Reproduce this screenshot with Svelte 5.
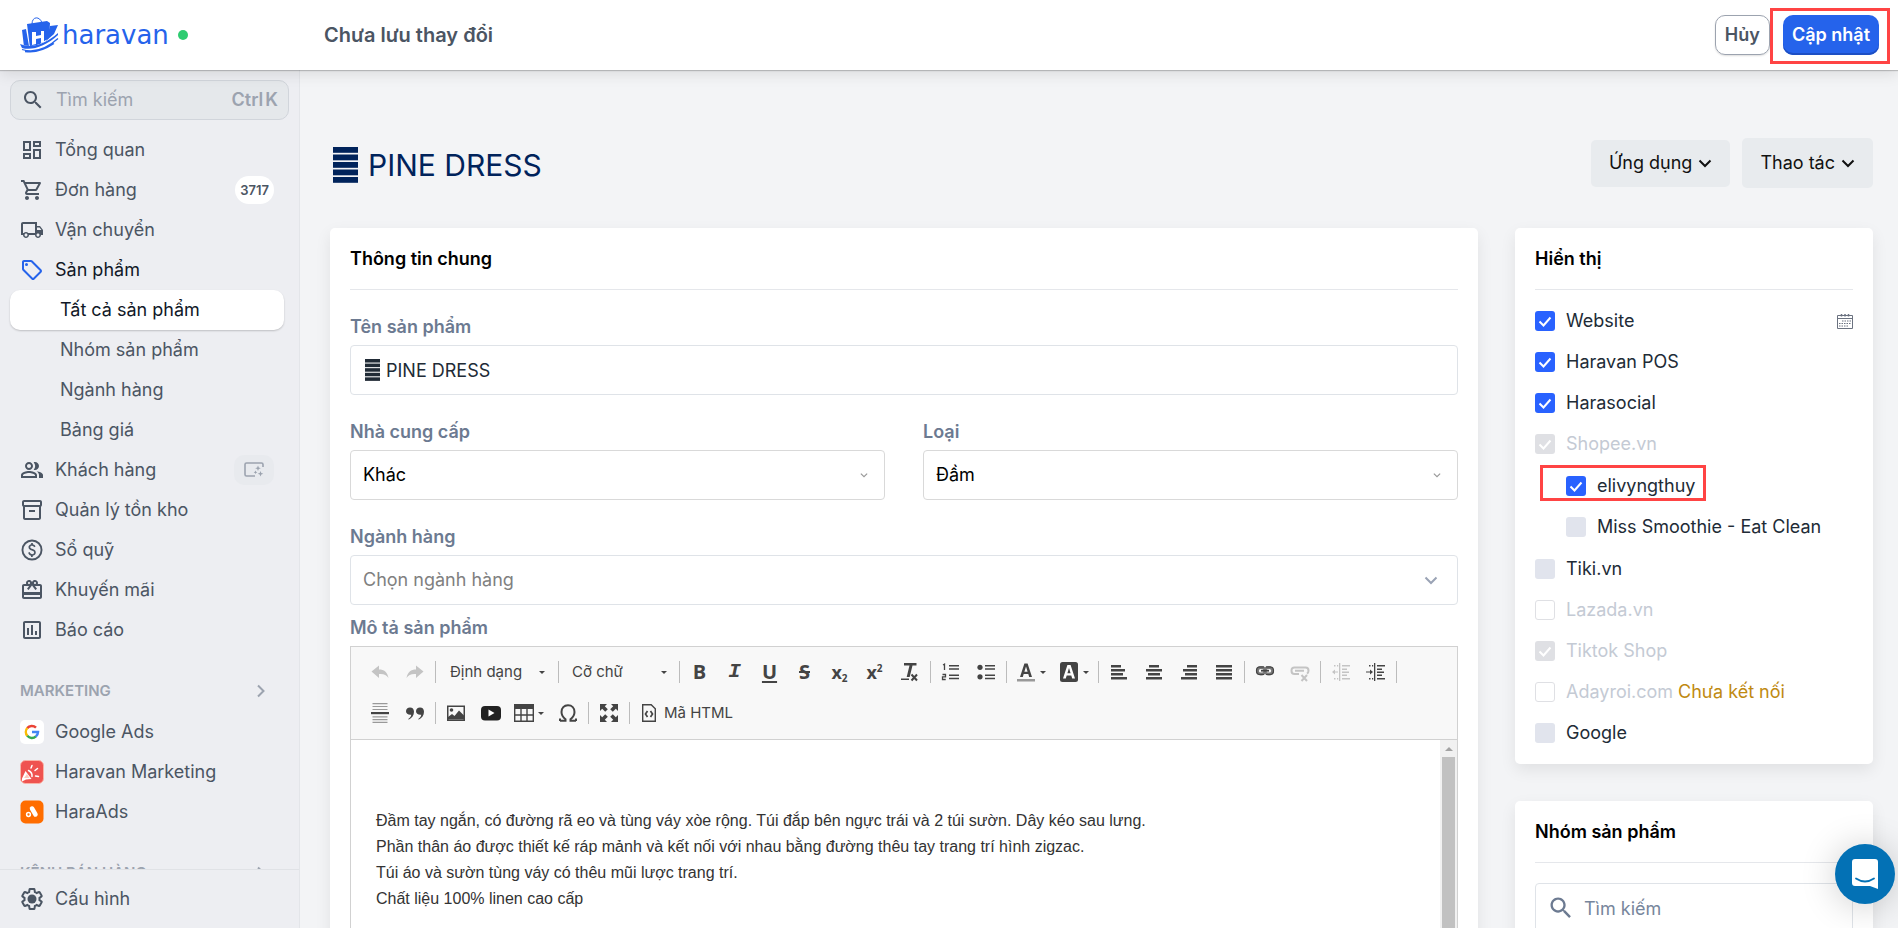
<script lang="ts">
  const icons: Record<string, string> = {
    dashboard: 'M19 5v2h-4V5h4M9 5v6H5V5h4m10 8v6h-4v-6h4M9 17v2H5v-2h4M21 3h-8v6h8V3zM11 3H3v10h8V3zm10 8h-8v10h8V11zm-10 4H3v6h8v-6z',
    cart: 'M15.55 13c.75 0 1.41-.41 1.75-1.03l3.58-6.49c.37-.66-.11-1.48-.87-1.48H5.21l-.94-2H1v2h2l3.6 7.59-1.35 2.44C4.52 15.37 5.48 17 7 17h12v-2H7l1.1-2h7.45zM6.16 6h12.15l-2.76 5H8.53L6.16 6zM7 18c-1.1 0-1.99.9-1.99 2S5.9 22 7 22s2-.9 2-2-.9-2-2-2zm10 0c-1.1 0-1.99.9-1.99 2s.89 2 1.99 2 2-.9 2-2-.9-2-2-2z',
    truck: 'M20 8h-3V4H3c-1.1 0-2 .9-2 2v11h2c0 1.66 1.34 3 3 3s3-1.34 3-3h6c0 1.66 1.34 3 3 3s3-1.34 3-3h2v-5l-3-4zM6 18.5c-.83 0-1.5-.67-1.5-1.5s.67-1.5 1.5-1.5 1.5.67 1.5 1.5-.67 1.5-1.5 1.5zM15 15H8.2c-.5-.6-1.3-1-2.2-1s-1.7.4-2.2 1H3V6h12v9zm3 3.5c-.83 0-1.5-.67-1.5-1.5s.67-1.5 1.5-1.5 1.5.67 1.5 1.5-.67 1.5-1.5 1.5zM17 12V9.5h2.5l1.96 2.5H17z',
    tag: 'M21.41 11.58l-9-9C12.05 2.22 11.55 2 11 2H4c-1.1 0-2 .9-2 2v7c0 .55.22 1.05.59 1.42l9 9c.36.36.86.58 1.41.58s1.05-.22 1.41-.59l7-7c.37-.36.59-.86.59-1.41s-.23-1.06-.59-1.42zM13 20.01L4 11V4h7v-.01l9 9-7 7.02zM6.5 5a1.5 1.5 0 100 3 1.5 1.5 0 000-3z',
    people: 'M9 12c2.21 0 4-1.79 4-4s-1.79-4-4-4-4 1.79-4 4 1.79 4 4 4zm0-6c1.1 0 2 .9 2 2s-.9 2-2 2-2-.9-2-2 .9-2 2-2zm0 7c-2.67 0-8 1.34-8 4v3h16v-3c0-2.66-5.33-4-8-4zm6 5H3v-.99C3.2 16.29 6.3 15 9 15s5.8 1.29 6 2v1zM15 12c2.21 0 4-1.79 4-4s-1.79-4-4-4c-.47 0-.91.1-1.33.24a5.98 5.98 0 010 7.52c.42.14.86.24 1.33.24zM16.67 13.13C18.04 14.06 19 15.32 19 17v3h4v-3c0-2.18-3.57-3.47-6.33-3.87z',
    box: 'M20 2H4c-1 0-2 .9-2 2v3.01c0 .72.43 1.34 1 1.69V20c0 1.1 1.1 2 2 2h14c.9 0 2-.9 2-2V8.7c.57-.35 1-.97 1-1.69V4c0-1.1-1-2-2-2zm-1 18H5V9h14v11zm1-13H4V4h16v3zM9 12h6v2H9z',
    money: 'M12 1.5a10.5 10.5 0 100 21 10.5 10.5 0 000-21zm0 1.9a8.6 8.6 0 110 17.2 8.6 8.6 0 010-17.2zM12.89 11.1c-1.78-.59-2.64-.96-2.64-1.9 0-1.02 1.11-1.39 1.81-1.39 1.31 0 1.79.99 1.9 1.34l1.58-.67c-.15-.44-.82-1.91-2.66-2.23V5h-1.75v1.26c-2.6.56-2.62 2.85-2.62 2.96 0 2.27 2.25 2.91 3.35 3.31 1.58.56 2.28 1.07 2.28 2.03 0 1.13-1.05 1.61-1.98 1.61-1.82 0-2.34-1.87-2.4-2.09l-1.66.67c.63 2.19 2.28 2.78 2.9 2.96V19h1.75v-1.24c.52-.09 3.02-.59 3.02-3.22.01-1.39-.6-2.61-3-3.44z',
    gift: 'M20 6h-2.18c.11-.31.18-.65.18-1 0-1.66-1.34-3-3-3-1.05 0-1.96.54-2.5 1.35l-.5.67-.5-.68C10.96 2.54 10.05 2 9 2 7.34 2 6 3.34 6 5c0 .35.07.69.18 1H4c-1.11 0-1.99.89-1.99 2L2 19c0 1.11.89 2 2 2h16c1.11 0 2-.89 2-2V8c0-1.11-.89-2-2-2zm-5-2c.55 0 1 .45 1 1s-.45 1-1 1-1-.45-1-1 .45-1 1-1zM9 4c.55 0 1 .45 1 1s-.45 1-1 1-1-.45-1-1 .45-1 1-1zm11 15H4v-2h16v2zm0-5H4V8h5.08L7 10.83 8.62 12 12 7.4l3.38 4.6L17 10.83 14.92 8H20v6z',
    chart: 'M19 3H5c-1.1 0-2 .9-2 2v14c0 1.1.9 2 2 2h14c1.1 0 2-.9 2-2V5c0-1.1-.9-2-2-2zm0 16H5V5h14v14zM7 10h2v7H7zm4-3h2v10h-2zm4 6h2v4h-2z',
    search: 'M15.5 14h-.79l-.28-.27C15.41 12.59 16 11.11 16 9.5 16 5.91 13.09 3 9.5 3S3 5.91 3 9.5 5.91 16 9.5 16c1.61 0 3.09-.59 4.23-1.57l.27.28v.79l5 4.99L20.49 19l-4.99-5zm-6 0C7.01 14 5 11.99 5 9.5S7.01 5 9.5 5 14 7.01 14 9.5 11.99 14 9.5 14z',
    gear: 'M19.43 12.98c.04-.32.07-.64.07-.98s-.03-.66-.07-.98l2.11-1.65c.19-.15.24-.42.12-.64l-2-3.46c-.09-.16-.26-.25-.44-.25-.06 0-.12.01-.17.03l-2.49 1c-.52-.4-1.08-.73-1.69-.98l-.38-2.65C14.46 2.18 14.25 2 14 2h-4c-.25 0-.46.18-.49.42l-.38 2.65c-.61.25-1.17.59-1.69.98l-2.49-1c-.06-.02-.12-.03-.18-.03-.17 0-.34.09-.43.25l-2 3.46c-.13.22-.07.49.12.64l2.11 1.65c-.04.32-.07.65-.07.98s.03.66.07.98l-2.11 1.65c-.19.15-.24.42-.12.64l2 3.46c.09.16.26.25.44.25.06 0 .12-.01.17-.03l2.49-1c.52.4 1.08.73 1.69.98l.38 2.65c.03.24.24.42.49.42h4c.25 0 .46-.18.49-.42l.38-2.65c.61-.25 1.17-.59 1.69-.98l2.49 1c.06.02.12.03.18.03.17 0 .34-.09.43-.25l2-3.46c.12-.22.07-.49-.12-.64l-2.11-1.65z',
  };

  const nav = [
    { icon: 'dashboard', label: 'Tổng quan' },
    { icon: 'cart', label: 'Đơn hàng', badge: '3717' },
    { icon: 'truck', label: 'Vận chuyển' },
    { icon: 'tag', label: 'Sản phẩm', active: true, children: ['Tất cả sản phẩm', 'Nhóm sản phẩm', 'Ngành hàng', 'Bảng giá'] },
    { icon: 'people', label: 'Khách hàng', promo: true },
    { icon: 'box', label: 'Quản lý tồn kho' },
    { icon: 'money', label: 'Sổ quỹ' },
    { icon: 'gift', label: 'Khuyến mãi' },
    { icon: 'chart', label: 'Báo cáo' },
  ];

  type Channel = { id: string; label: string; state: 'on' | 'off' | 'locked-on' | 'locked-off'; note?: string; calendar?: boolean; marked?: boolean; children?: Channel[] };
  const channels: Channel[] = [
    { id: 'web', label: 'Website', state: 'on', calendar: true },
    { id: 'pos', label: 'Haravan POS', state: 'on' },
    { id: 'social', label: 'Harasocial', state: 'on' },
    { id: 'shopee', label: 'Shopee.vn', state: 'locked-on', children: [
      { id: 'elivy', label: 'elivyngthuy', state: 'on', marked: true },
      { id: 'miss', label: 'Miss Smoothie - Eat Clean', state: 'off' },
    ] },
    { id: 'tiki', label: 'Tiki.vn', state: 'off' },
    { id: 'lazada', label: 'Lazada.vn', state: 'locked-off' },
    { id: 'tiktok', label: 'Tiktok Shop', state: 'locked-on' },
    { id: 'adayroi', label: 'Adayroi.com', state: 'locked-off', note: 'Chưa kết nối' },
    { id: 'google', label: 'Google', state: 'off' },
  ];

  const alignments = [
    { name: 'Căn trái', bars: [[2, 12], [2, 16], [2, 14], [2, 18]] },
    { name: 'Căn giữa', bars: [[5, 15], [2, 18], [4, 16], [2, 18]] },
    { name: 'Căn phải', bars: [[8, 18], [4, 18], [6, 18], [2, 18]] },
    { name: 'Căn đều', bars: [[2, 18], [2, 18], [2, 18], [2, 18]] },
  ];

  const paragraphs = [
    'Đầm tay ngắn, có đường rã eo và tùng váy xòe rộng. Túi đắp bên ngực trái và 2 túi sườn. Dây kéo sau lưng.',
    'Phần thân áo được thiết kế ráp mảnh và kết nối với nhau bằng đường thêu tay trang trí hình zigzac.',
    'Túi áo và sườn tùng váy có thêu mũi lược trang trí.',
    'Chất liệu 100% linen cao cấp',
  ];

  let productName = $state('PINE DRESS');
</script>

{#snippet icon(name: string)}
  <svg class="icon" viewBox="0 0 24 24" aria-hidden="true"><path fill="currentColor" fill-rule="evenodd" d={icons[name]} /></svg>
{/snippet}

{#snippet stack()}
  <svg class="stack" viewBox="0 0 24 36" preserveAspectRatio="none" aria-hidden="true">
    {#each [0, 1, 2, 3, 4] as i}<rect x="0" y={i * 7.5} width="24" height="5.8" fill="currentColor" />{/each}
  </svg>
{/snippet}

{#snippet chevron()}
  <svg class="chevron" viewBox="0 0 14 14" aria-hidden="true"><path d="M1.500 4.500L7 10l5.500-5.500" fill="none" stroke="currentColor" stroke-width="2" /></svg>
{/snippet}

{#snippet caret()}
  <svg class="caret" viewBox="0 0 6 3" aria-hidden="true"><path d="M0 0h6L3 3z" fill="currentColor" /></svg>
{/snippet}

{#snippet channelRow(c: Channel)}
  <div class="channel" class:locked={c.state.startsWith('locked')}>
    <span class="pick" class:marked={c.marked}>
      <input type="checkbox" id={c.id} class={c.state} checked={c.state.endsWith('on')} disabled={c.state.startsWith('locked')} />
      <label for={c.id}>{c.label}</label>
    </span>
    {#if c.note}<span class="note">{c.note}</span>{/if}
    {#if c.calendar}
      <button class="calendar" aria-label="Đặt lịch hiển thị">
        <svg viewBox="0 0 16 16" aria-hidden="true">
          <path d="M.5 2.500h15v13H.5zM.5 5.500h15" fill="none" stroke="#6b7280" />
          <path d="M4.500 1v2.500M8 1v2.500M11.500 1v2.500" stroke="#6b7280" stroke-width="1.500" />
          <path d="M5 8h9M2 10.500h12M2 13h9" stroke="#6b7280" stroke-width="1.200" stroke-dasharray="1.500 1" />
        </svg>
      </button>
    {/if}
  </div>
{/snippet}

<div class="app">
  <header class="topbar">
    <a class="brand" href="#home">
      <svg width="39" height="36" viewBox="0 0 39 36" aria-hidden="true">
        <path d="M12 7C12-1 20-1 22 6" fill="none" stroke="#2563eb" stroke-width="1" />
        <path d="M2 13l4-1 3 17-5 1zM30 9l8-1-4 9-8 7z" fill="#2563eb" />
        <path d="M7 7l20-3 3 2-1 15-9 6-10 4z" fill="#2563eb" />
        <path d="M12 15h4v4l5-1v-4h3v11l-3 1v-5l-5 1v5l-4 1z" fill="#fff" />
        <path d="M0 27c12 5 25 0 38-11v8C26 33 12 37 1 33z" fill="#fff" />
        <path d="M0 27c12 5 25 0 38-11v2C26 29 12 34 2 31z" fill="#2563eb" />
        <path d="M2 32.500c13 4 26-2 36-11M5 34.500c11 2 20-2 29-8" fill="none" stroke="#2563eb" stroke-width="1.300" />
      </svg>
      <span>haravan</span>
      <i class="online"></i>
    </a>
    <strong class="status">Chưa lưu thay đổi</strong>
    <div class="actions">
      <button class="cancel">Hủy</button>
      <span class="highlight"><button class="save">Cập nhật</button></span>
    </div>
  </header>

  <div class="body">
    <aside class="sidebar">
      <div class="sidebar-scroll">
        <div class="search">
          {@render icon('search')}
          <input type="search" placeholder="Tìm kiếm" aria-label="Tìm kiếm" />
          <kbd><span>Ctrl</span><span>K</span></kbd>
        </div>
        <nav>
          {#each nav as item}
            <a class="nav-item" class:active={item.active} href="#nav">
              {@render icon(item.icon)}
              <span class="nav-label">{item.label}</span>
              {#if item.badge}<span class="count">{item.badge}</span>{/if}
              {#if item.promo}
                <span class="promo">
                  <svg width="20" height="16" viewBox="0 0 20 16" aria-hidden="true">
                    <path d="M11 14H2.500Q1 14 1 12.500V2.500Q1 1 2.500 1h15Q19 1 19 2.500V5" fill="none" stroke="#9ca3af" stroke-width="1.600" />
                    <path d="M14 3.500l.8 2 2 .8-2 .8-.8 2-.8-2-2-.8 2-.8zM16.500 9l.8 2 2 .8-2 .8-.8 2-.8-2-2-.8 2-.8zM11.500 8.500l.6 1.200 1.200.6-1.200.6-.6 1.200-.6-1.200-1.200-.6 1.200-.6z" fill="#9ca3af" />
                  </svg>
                </span>
              {/if}
            </a>
            {#if item.children}
              {#each item.children as child, i}
                <a class="sub-item" class:selected={i === 0} href="#sub">{child}</a>
              {/each}
            {/if}
          {/each}
        </nav>
        <div class="group">
          <span>MARKETING</span>
          <svg width="8" height="14" viewBox="0 0 8 14" aria-hidden="true"><path d="M1 1.500L6.500 7 1 12.500" fill="none" stroke="currentColor" stroke-width="2" /></svg>
        </div>
        <a class="nav-item" href="#ads">
          <svg class="icon" viewBox="0 0 24 24" aria-hidden="true">
            <rect width="24" height="24" rx="5" fill="#fff" />
            <path d="M7.200 8.100A6 6 0 0116 7.600" fill="none" stroke="#ea4335" stroke-width="2.500" />
            <path d="M7.400 15.900A6 6 0 017.300 8" fill="none" stroke="#fbbc05" stroke-width="2.500" />
            <path d="M15.900 16.400A6 6 0 017.300 15.800" fill="none" stroke="#34a853" stroke-width="2.500" />
            <path d="M12 12h6a6 6 0 01-2.200 4.500" fill="none" stroke="#4285f4" stroke-width="2.500" />
          </svg>
          <span class="nav-label">Google Ads</span>
        </a>
        <a class="nav-item" href="#marketing">
          <svg class="icon" viewBox="0 0 24 24" aria-hidden="true">
            <rect x=".5" y=".5" width="23" height="23" rx="5" fill="#ef5350" stroke="#f9b4a8" />
            <path d="M2 18.500L5.500 11l6 8-5.500.500-4 2z" fill="#fff" /><path d="M4 18l3-4 2.500 4z" fill="#ffc9bd" />
            <path d="M8.500 10.500q4 2 3.500 6M11 8l1-2.500M15 10.500l2.500-2M15.500 16l3 .5" fill="none" stroke="#fff" stroke-width="1.500" stroke-linecap="round" />
          </svg>
          <span class="nav-label">Haravan Marketing</span>
        </a>
        <a class="nav-item" href="#haraads">
          <svg class="icon" viewBox="0 0 24 24" aria-hidden="true">
            <rect x=".5" y=".5" width="23" height="23" rx="5" fill="#ff6d00" />
            <path d="M12 8.500l3.500 6" stroke="#fff" stroke-width="4.500" stroke-linecap="round" />
            <circle cx="8.500" cy="14.500" r="1.900" fill="none" stroke="#fff" stroke-width="1.500" />
          </svg>
          <span class="nav-label">HaraAds</span>
        </a>
        <div class="group">
          <span>KÊNH BÁN HÀNG</span>
          <svg width="8" height="14" viewBox="0 0 8 14" aria-hidden="true"><path d="M1 1.500L6.500 7 1 12.500" fill="none" stroke="currentColor" stroke-width="2" /></svg>
        </div>
      </div>
      <div class="sidebar-foot">
        <a class="nav-item" href="#settings">
          <svg class="icon" viewBox="0 0 24 24" aria-hidden="true">
            <path d={icons.gear} fill="none" stroke="currentColor" stroke-width="2" /><circle cx="12" cy="12" r="4.500" fill="currentColor" />
          </svg>
          <span class="nav-label">Cấu hình</span>
        </a>
      </div>
    </aside>

    <main>
      <div class="page-head">
        <h1>{@render stack()}<span>PINE DRESS</span></h1>
        <div class="page-actions">
          <button>Ứng dụng {@render chevron()}</button>
          <button class="tall">Thao tác {@render chevron()}</button>
        </div>
      </div>

      <div class="columns">
        <section class="card">
          <h2>Thông tin chung</h2>
          <div class="fields">
            <div class="field">
              <label for="name">Tên sản phẩm</label>
              <div class="control name">{@render stack()}<input id="name" type="text" bind:value={productName} /></div>
            </div>
            <div class="pair">
              <div class="field">
                <label for="vendor">Nhà cung cấp</label>
                <div class="control strong"><select id="vendor"><option>Khác</option></select>{@render chevron()}</div>
              </div>
              <div class="field">
                <label for="type">Loại</label>
                <div class="control strong"><select id="type"><option>Đầm</option></select>{@render chevron()}</div>
              </div>
            </div>
            <div class="field">
              <label for="category">Ngành hàng</label>
              <div class="control muted"><select id="category"><option>Chọn ngành hàng</option></select>{@render chevron()}</div>
            </div>
          </div>

          <div class="editor-label" id="description-label">Mô tả sản phẩm</div>
          <div class="editor">
            <div class="toolbar">
              <div class="tool-row">
                <button aria-label="Hoàn tác" disabled><svg viewBox="0 0 20 20"><path d="M1.500 9.500L9 3.500v4c5 0 8.500 2.500 9.500 8.500-2-3-5-4.500-9.500-4v4z" /></svg></button>
                <button aria-label="Làm lại" disabled><svg viewBox="0 0 20 20"><path d="M18.500 9.500L11 3.500v4c-5 0-8.500 2.500-9.500 8.500 2-3 5-4.500 9.500-4v4z" /></svg></button>
                <span class="sep"></span>
                <span class="combo format"><select aria-label="Định dạng"><option>Định dạng</option></select>{@render caret()}</span>
                <span class="sep"></span>
                <span class="combo"><select aria-label="Cỡ chữ"><option>Cỡ chữ</option></select>{@render caret()}</span>
                <span class="sep"></span>
                <button class="glyph">B</button>
                <button class="glyph slanted">I</button>
                <button class="glyph"><u>U</u></button>
                <button class="glyph"><s>S</s></button>
                <button class="glyph script">x<sub>2</sub></button>
                <button class="glyph script">x<sup>2</sup></button>
                <button aria-label="Xóa định dạng"><svg viewBox="0 0 20 20"><path d="M4 1h12.500v2.500h-4L9.700 15H6.700L9.500 3.500H4zM1 16.500h8V18H1z" /><path d="M11.500 12.500l5.500 6M17 12.500l-5.500 6" fill="none" stroke="currentColor" stroke-width="2" /></svg></button>
                <span class="sep"></span>
                <button aria-label="Danh sách số"><svg viewBox="0 0 20 20"><path d="M2 3l1.500-.8V8M1.500 12.500h3v2.300h-3V17.500h3.200" fill="none" stroke="currentColor" stroke-width="1.300" /><path d="M8 3h10v1.500H8zM8 6.200h10v1.500H8zM8 12.500h10V14H8zM8 15.800h10v1.500H8z" /></svg></button>
                <button aria-label="Danh sách"><svg viewBox="0 0 20 20"><circle cx="4" cy="5.300" r="2.600" /><circle cx="4" cy="14.800" r="2.600" /><path d="M9 3h10v1.500H9zM9 6.200h10v1.500H9zM9 12.500h10V14H9zM9 15.800h10v1.500H9z" /></svg></button>
                <span class="sep"></span>
                <button class="wide" aria-label="Màu chữ"><svg viewBox="0 0 20 20"><path fill-rule="evenodd" d="M8.400 1.500h3.200L16 15h-2.800l-.9-3H7.700l-.9 3H4zM10 4.500L8.400 9.700h3.200z" /><path d="M1 17h18v2.500H1z" fill="#999" /></svg>{@render caret()}</button>
                <button class="wide" aria-label="Màu nền"><svg viewBox="0 0 20 20"><rect x="1" y="0" width="18" height="20" rx="2.500" /><path fill="#fff" fill-rule="evenodd" d="M8.400 3h3.200L16 16.500h-2.800l-.9-3H7.700l-.9 3H4zM10 6l-1.600 5.200h3.200z" /></svg>{@render caret()}</button>
                <span class="sep"></span>
                {#each alignments as a}
                  <button aria-label={a.name}><svg viewBox="0 0 20 20">{#each a.bars as [from, to], i}<rect x={from} y={3 + i * 4} width={to - from} height="2.500" />{/each}</svg></button>
                {/each}
                <span class="sep"></span>
                <button aria-label="Liên kết"><svg viewBox="0 0 20 20"><g fill="none" stroke="#777" stroke-width="2.800"><rect x="2.500" y="5.500" width="7.500" height="6.500" rx="3" /><rect x="10" y="5.500" width="7.500" height="6.500" rx="3" /></g><path d="M6 8.700h8" stroke="currentColor" stroke-width="1.800" /><path d="M9 5H4.500Q1.500 5 1.500 8.700t3 3.800H9M11 5h4.500q3 0 3 3.700t-3 3.800H11" fill="none" stroke="currentColor" stroke-width="1.200" /></svg></button>
                <button aria-label="Bỏ liên kết" disabled><svg viewBox="0 0 20 20"><g fill="none" stroke="currentColor" stroke-width="2"><path d="M9 12H4.500Q1.500 12 1.500 8.700T4.500 5.500h11q3 0 3 3.200 0 2-1.500 3M5 8.700h9" /><path d="M11.500 13l5.500 6M17 13l-5.500 6" /></g></svg></button>
                <span class="sep"></span>
                <button aria-label="Giảm lề" disabled><svg viewBox="0 0 20 20"><path d="M8 1h1.300v18H8zM11 3h8v1.500h-8zM11 6.500h5V8h-5zM11 9.500h7V11h-7zM11 12.500h5V14h-5zM11 16h8v1.500h-8zM1 10l3-2.500v2h3v1H4v2zM3 3h1.500v1.500H3zM6 3h1.200v1.500H6zM3 16h1.500v1.500H3zM6 16h1.200v1.500H6z" /></svg></button>
                <button aria-label="Tăng lề"><svg viewBox="0 0 20 20"><path d="M8 1h1.300v18H8zM11 3h8v1.500h-8zM11 6.500h5V8h-5zM11 9.500h7V11h-7zM11 12.500h5V14h-5zM11 16h8v1.500h-8zM7 10L4 7.500v2H0v1h4v2zM3 3h1.500v1.500H3zM6 3h1.200v1.500H6zM3 16h1.500v1.500H3zM6 16h1.200v1.500H6z" /></svg></button>
                <span class="sep"></span>
              </div>
              <div class="tool-row">
                <button aria-label="Ngắt trang"><svg viewBox="0 0 20 20"><path d="M1 9h18v2.200H1z" /><path d="M2.500 .6h15M2.500 3.500h15M2.500 6.500h15M2.500 13.800h15M2.500 16.600h15M2.500 19.400h15" stroke="#999" stroke-width="1.200" /></svg></button>
                <button aria-label="Trích dẫn"><svg viewBox="0 0 20 20"><path d="M5 4.500c2.500 0 4 1.500 4 4.200 0 3.500-2 6.500-5.500 8v-1c2-1.200 2.700-2.700 2.700-4C3.500 12.200 1 10.700 1 8.200 1 6 2.700 4.500 5 4.500zM15 4.500c2.500 0 4 1.500 4 4.200 0 3.500-2 6.500-5.500 8v-1c2-1.200 2.700-2.700 2.700-4-2.700.5-5.200-1-5.200-3.500 0-2.200 1.700-3.700 4-3.700z" /></svg></button>
                <span class="sep"></span>
                <button aria-label="Hình ảnh"><svg viewBox="0 0 20 20"><path fill-rule="evenodd" d="M1 2.500h18v15.500H1zM2.500 4v12.500h15V4z" /><circle cx="5.500" cy="7" r="1.800" /><path d="M2 16.500v-2.500l4-3 2.500 2L13 7.500l5 5v4z" /></svg></button>
                <button aria-label="Video"><svg viewBox="0 0 20 20"><rect x="0" y="3" width="20" height="14.500" rx="4" fill="#222" /><path d="M7.500 6.500v7l6-3.500z" fill="#fff" /></svg></button>
                <button class="wide table" aria-label="Bảng"><svg viewBox="0 0 20 20"><path d="M0 1h20v5H0z" /><path d="M.7 5v13.300h18.600V5M.7 12h18.600M7 6v12M13 6v12" fill="none" stroke="currentColor" stroke-width="1.400" /></svg>{@render caret()}</button>
                <button aria-label="Ký tự đặc biệt"><svg viewBox="0 0 20 20"><path d="M2 17.700h5.500v-1.500C4.500 14 3.500 11.500 3.500 9 3.500 5 6 2.300 10 2.300S16.500 5 16.500 9c0 2.500-1 5-4 7.200v1.500H18M2 18v-2.500M18 18v-2.500" fill="none" stroke="currentColor" stroke-width="2" /></svg></button>
                <span class="sep"></span>
                <button aria-label="Toàn màn hình"><svg viewBox="0 0 20 20"><path d="M1 1h7L5.800 3.200l3 3-2.600 2.600-3-3L1 8zM19 1v7l-2.200-2.200-3 3-2.600-2.600 3-3L12 1zM1 19v-7l2.200 2.200 3-3 2.600 2.600-3 3L8 19zM19 19h-7l2.200-2.200-3-3 2.600-2.600 3 3L19 12z" /></svg></button>
                <span class="sep"></span>
                <button class="source"><svg viewBox="0 0 20 20"><path d="M3.700 1.700h8.500l4.100 4v12.600H3.700z" fill="none" stroke="currentColor" stroke-width="1.400" /><path d="M8.500 8L6.500 11l2 3M11.500 8l2 3-2 3" fill="none" stroke="currentColor" stroke-width="1.700" /></svg>Mã HTML</button>
              </div>
            </div>
            <div class="editor-body">
              <div class="content" aria-labelledby="description-label" role="textbox" tabindex="0" contenteditable="true">
                {#each paragraphs as p}<p>{p}</p>{/each}
              </div>
              <div class="scrollbar"><span class="up"></span><span class="thumb"></span></div>
            </div>
          </div>
        </section>

        <div class="side">
          <section class="card">
            <h2>Hiển thị</h2>
            <div class="channels">
              {#each channels as c}
                {@render channelRow(c)}
                {#if c.children}
                  <div class="nested">{#each c.children as child}{@render channelRow(child)}{/each}</div>
                {/if}
              {/each}
            </div>
          </section>
          <section class="card">
            <h2>Nhóm sản phẩm</h2>
            <div class="control group-search">{@render icon('search')}<input type="search" placeholder="Tìm kiếm" aria-label="Tìm nhóm sản phẩm" /></div>
          </section>
        </div>
      </div>
    </main>
  </div>

  <button class="chat" aria-label="Trò chuyện">
    <svg width="28" height="32" viewBox="0 0 28 32" aria-hidden="true">
      <path d="M4 1h20q3 0 3 3v27l-8-3H4q-3 0-3-3V4q0-3 3-3z" fill="#fff" />
      <path d="M5 20.500q9 6 18 0" fill="none" stroke="#0371b5" stroke-width="1.800" stroke-linecap="round" />
    </svg>
  </button>
</div>

<style>
  :global(body) { margin: 0; }
  .app, .app :global(*) { box-sizing: border-box; }
  .app {
    display: flex; flex-direction: column; height: 100vh; overflow: hidden;
    font: 400 18px/24px Inter, "Noto Sans", sans-serif; color: #212b36; background: #f3f4f6;
  }
  button, input, select { font: inherit; color: inherit; margin: 0; padding: 0; border: 0; background: none; outline: 0; }
  select { appearance: none; }
  a { color: inherit; text-decoration: none; }
  .icon { width: 24px; height: 24px; flex: none; }

  .topbar {
    position: relative; z-index: 2; display: flex; align-items: center; height: 70px; flex: none;
    background: #fff; padding: 0 8px 0 20px; box-shadow: 0 1px 1px #0003, 0 4px 14px #0000001a;
  }
  .brand { display: flex; align-items: center; width: 304px; color: #2563eb; font: 400 26px/36px "DejaVu Sans", sans-serif; gap: 3px; }
  .online { width: 10px; height: 10px; border-radius: 50%; background: #2ecc71; margin-left: 6px; }
  .status { font-size: 20px; font-weight: 600; color: #4b5563; }
  .actions { display: flex; align-items: center; margin-left: auto; }
  .cancel, .save { height: 40px; border-radius: 10px; font-weight: 600; padding: 0 9px; }
  .cancel { border: 1px solid #9ca3af; color: #4b5563; box-shadow: 0 1px 2px #0002; }
  .save { background: #2563eb; color: #fff; box-shadow: inset 0 -2px 0 #1d4fc4; }
  .highlight { border: 3px solid #ff4444; margin-top: 2px; padding: 4px 8px 6px 10px; height: 56px; }

  .body { display: flex; flex: 1; min-height: 0; }
  .sidebar { display: flex; flex-direction: column; width: 300px; flex: none; background: #edeef2; border-right: 1px solid #e3e5e9; color: #4b5563; }
  .sidebar-scroll { flex: 1; min-height: 0; overflow: hidden; padding-top: 10px; }
  .search {
    display: flex; align-items: center; height: 40px; margin: 0 10px 10px; padding: 0 10px; gap: 11px;
    border: 1px solid #d1d5db; border-radius: 10px; background: #e5e8eb;
  }
  .search input { flex: 1; min-width: 0; }
  .search input::placeholder { color: #9ca3af; }
  kbd { display: flex; gap: 2px; font: inherit; font-weight: 600; color: #9ca3af; }
  .nav-item { display: flex; align-items: center; height: 40px; padding: 0 25px 0 20px; gap: 11px; }
  .nav-label { flex: 1; }
  .active { color: #111827; }
  .active .icon { color: #2563eb; }
  .count { padding: 0 5px; border-radius: 14px; background: #fff; font-size: 13px; font-weight: 600; line-height: 28px; }
  .promo { display: grid; place-items: center; width: 40px; height: 30px; border-radius: 10px; background: #e8eaee; }
  .sub-item { display: block; height: 40px; line-height: 40px; margin: 0 15px 0 10px; padding-left: 50px; border-radius: 10px; }
  .selected { background: #fff; color: #111827; box-shadow: 0 1px 2px #0003; }
  .group { display: flex; align-items: center; justify-content: space-between; height: 40px; margin-top: 21px; padding: 0 34px 0 20px; font-size: 15px; font-weight: 600; color: #9ca3af; }
  .group + .nav-item { margin-top: 1px; }
  .sidebar-foot { border-top: 1px solid #e0e2e6; padding: 9px 0; }

  main { flex: 1; min-width: 0; overflow: hidden; padding: 62px 25px 0 30px; }
  .page-head { display: flex; justify-content: space-between; align-items: center; height: 62px; margin-bottom: 34px; }
  h1 { display: flex; align-items: center; gap: 10px; margin: 0; padding: 3px 0 0 3px; font-size: 30px; line-height: 40px; font-weight: 400; color: #00235b; }
  h1 :global(.stack) { width: 25px; height: 36px; }
  .page-actions { display: flex; align-items: center; gap: 12px; color: #111; }
  .page-actions button { display: flex; align-items: center; gap: 6px; height: 47px; padding: 0 18px; border-radius: 5px; background: #e8ebee; }
  .page-actions .tall { height: 50px; }
  .chevron { width: 14px; height: 14px; flex: none; }

  .columns { display: grid; grid-template-columns: minmax(0, 1fr) 358px; gap: 37px; align-items: start; }
  .card { background: #fff; border-radius: 5px; padding: 0 20px; box-shadow: 0 6px 16px #00000014; }
  h2 { margin: 0; height: 62px; line-height: 62px; border-bottom: 1px solid #e5e7eb; font-size: 18px; font-weight: 600; color: #000; }
  .fields { display: flex; flex-direction: column; gap: 21px; padding-top: 21px; }
  .field { display: flex; flex-direction: column; gap: 2px; }
  .field label, .editor-label { line-height: 32px; font-weight: 600; color: #6c7a91; }
  .pair { display: grid; grid-template-columns: 1fr 1fr; gap: 38px; }
  .control { display: flex; align-items: center; height: 50px; padding: 0 12px; border: 1px solid #dfe3e8; border-radius: 4px; }
  .control input, .control select { flex: 1; min-width: 0; height: 100%; }
  .control.name { padding-left: 14px; gap: 6px; }
  .name :global(.stack) { width: 15px; height: 22px; }
  .strong { border-color: #d9d9d9; color: #000; }
  .strong .chevron { width: 8px; height: 8px; color: #999; margin-right: 4px; }
  .muted { color: #808080; }
  .muted .chevron { color: #9aa3b5; margin-right: 7px; }
  .editor-label { padding: 7px 0 2px; }
  .editor { border: 1px solid #d1d1d1; color: #444; }
  .toolbar { display: flex; flex-direction: column; gap: 5px; padding: 7px 11px; height: 93px; background: #f8f8f8; border-bottom: 1px solid #d1d1d1; }
  .tool-row { display: flex; align-items: center; height: 36px; font-size: 15px; }
  .tool-row button { display: flex; align-items: center; justify-content: center; width: 35px; height: 30px; }
  .tool-row button svg:first-child { width: 20px; height: 20px; fill: currentColor; }
  .tool-row button:disabled { color: #c4c4c4; }
  .tool-row .wide { width: 43px; gap: 4px; }
  .tool-row .wide.table { width: 42px; }
  .tool-row .source { width: auto; padding-left: 7px; gap: 5px; }
  .tool-row .glyph { font: 700 20px/24px "Open Sans", sans-serif; }
  .tool-row .slanted { font: italic 700 21px/24px "Liberation Mono", monospace; }
  .tool-row .script { font-size: 18px; }
  .script sub, .script sup { font-size: 10px; line-height: 10px; }
  .script sub { margin-top: 12px; }
  .script sup { margin-bottom: 8px; }
  u { text-decoration-thickness: 2px; text-underline-offset: 2px; }
  .caret { width: 6px; height: 3px; flex: none; }
  .sep { width: 1px; height: 22px; margin: 0 2px 0 3px; background: #bcbcbc; flex: none; }
  .combo { display: flex; align-items: center; width: 115px; padding: 0 9px 0 11px; }
  .combo.format { width: 117px; padding-left: 12px; padding-right: 10px; }
  .combo select { flex: 1; min-width: 0; }
  .editor-body { display: flex; height: 400px; background: #fff; }
  .content { flex: 1; padding: 68px 25px; font: 16px/26px "Liberation Sans", Arial, sans-serif; color: #333; outline: 0; }
  .content p { margin: 0; }
  .scrollbar { display: flex; flex-direction: column; align-items: center; gap: 6px; width: 17px; background: #f1f1f1; }
  .up { margin-top: 7px; border: 4px solid transparent; border-top: 0; border-bottom-color: #a3a3a3; }
  .thumb { flex: 1; width: 13px; background: #c1c1c1; }

  .side { display: flex; flex-direction: column; gap: 37px; }
  .channels { padding: 10px 0 11px; color: #212b36; }
  .channel { display: flex; align-items: center; height: 41px; gap: 5px; }
  .pick { position: relative; display: flex; align-items: center; gap: 11px; }
  .pick input { appearance: none; width: 20px; height: 20px; border-radius: 3px; background: #e1e4ed center / 20px no-repeat; }
  .pick .on, .pick .locked-on { background-image: url("data:image/svg+xml,%3Csvg xmlns='http://www.w3.org/2000/svg' viewBox='0 0 20 20'%3E%3Cpath d='M4.500 10.500l4 4 7-8' fill='none' stroke='%23fff' stroke-width='2'/%3E%3C/svg%3E"); }
  .pick .on { background-color: #2962ff; }
  .pick .locked-on { background-color: #dfe0e4; }
  .pick .locked-off { background: #fff; border: 1px solid #dfe0e4; }
  .locked label { color: #c4cad4; }
  .note { color: #c08a12; }
  .nested { padding: 1px 0 1px 31px; }
  .marked::after { content: ""; position: absolute; inset: -9px -11px -3px -26px; border: 3px solid #ff4444; pointer-events: none; }
  .calendar { display: flex; margin-left: auto; }
  .calendar svg { width: 16px; height: 16px; }
  .group-search { margin: 20px 0; padding-left: 11px; gap: 9px; color: #6c7a91; }
  .group-search .icon { width: 28px; height: 28px; }
  .group-search input::placeholder { color: #77869c; }

  .chat {
    position: fixed; z-index: 3; right: 3px; bottom: 24px; display: grid; place-items: center;
    width: 60px; height: 60px; border-radius: 50%; background: #0371b5; box-shadow: 0 2px 36px #0003;
  }
</style>
